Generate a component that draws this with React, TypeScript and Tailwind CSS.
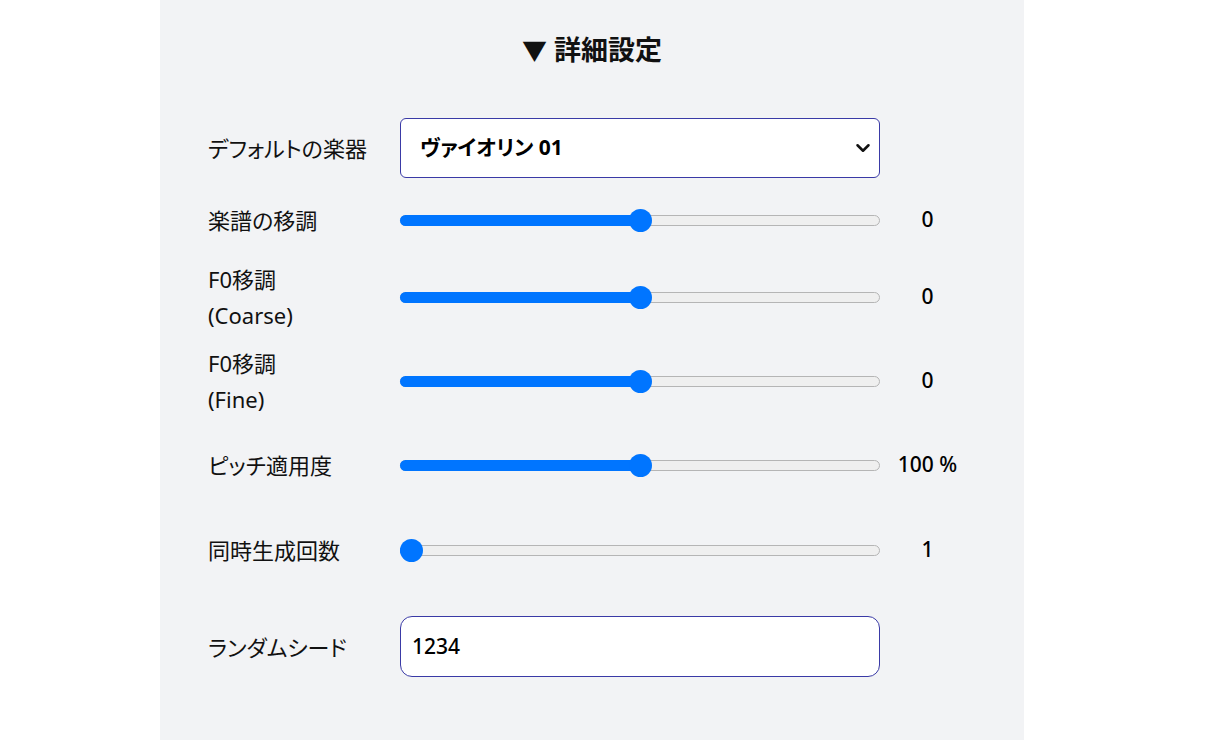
import { ChevronDown } from 'lucide-react'

const font = "font-['Noto_Sans','Noto_Sans_CJK_JP',sans-serif]"

function Slider({ frac, value }: { frac: number; value: string }) {
  const thumb = 23
  const left = (480 - thumb) * frac
  return (
    <>
      <div className="relative w-[480px] h-[23px] flex items-center">
        <div className="w-full h-[11px] rounded-full bg-[#efefef] border border-[#b5b5b5]" />
        <div
          className="absolute left-0 h-[11px] rounded-full bg-[#0075ff]"
          style={{ width: left + thumb / 2 }}
        />
        <div
          className="absolute top-0 w-[23px] h-[23px] rounded-full bg-[#0075ff]"
          style={{ left }}
        />
      </div>
      <div className="w-[95px] text-center text-[21px] font-medium text-black">{value}</div>
    </>
  )
}

function Label({ lines }: { lines: string[] }) {
  return (
    <div className="w-[192px] text-[22px] leading-[36px] text-[#111] [font-feature-settings:'palt']">
      {lines.map((l) => (
        <div key={l}>{l}</div>
      ))}
    </div>
  )
}

export default function App() {
  return (
    <div className={`min-h-screen bg-white ${font}`}>
      <div className="ml-[160px] w-[864px] min-h-[740px] bg-[#f2f3f5] pl-[48px] pt-[32px]">
        {/* Title */}
        <h2 className="h-[36px] leading-[36px] text-[27px] font-bold text-center text-[#111] pr-[48px]">
          <span className="text-[25px]">▼</span> 詳細設定
        </h2>

        {/* Default instrument */}
        <div className="mt-[50px] h-[60px] flex items-center">
          <Label lines={['デフォルトの楽器']} />
          <div className="w-[480px] h-[60px] rounded-[6px] border border-[#3a3aa6] bg-white flex items-center justify-between pl-[19px] pr-[5px]">
            <span className="text-[21px] font-bold text-black [font-feature-settings:'palt']">ヴァイオリン 01</span>
            <ChevronDown size={22} strokeWidth={2.75} className="text-[#111]" />
          </div>
        </div>

        {/* Transpose */}
        <div className="mt-[24px] h-[36px] flex items-center">
          <Label lines={['楽譜の移調']} />
          <Slider frac={0.5} value="0" />
        </div>

        <div className="mt-[23px] h-[72px] flex items-center">
          <Label lines={['F0移調', '(Coarse)']} />
          <Slider frac={0.5} value="0" />
        </div>

        <div className="mt-[12px] h-[72px] flex items-center">
          <Label lines={['F0移調', '(Fine)']} />
          <Slider frac={0.5} value="0" />
        </div>

        <div className="mt-[30px] h-[36px] flex items-center">
          <Label lines={['ピッチ適用度']} />
          <Slider frac={0.5} value="100 %" />
        </div>

        <div className="mt-[49px] h-[36px] flex items-center">
          <Label lines={['同時生成回数']} />
          <Slider frac={0} value="1" />
        </div>

        {/* Seed */}
        <div className="mt-[48px] h-[61px] flex items-center">
          <Label lines={['ランダムシード']} />
          <div className="w-[480px] h-[61px] rounded-[12px] border border-[#3a3aa6] bg-white flex items-center pl-[11px]">
            <span className="text-[21px] font-medium text-black">1234</span>
          </div>
        </div>
      </div>
    </div>
  )
}
